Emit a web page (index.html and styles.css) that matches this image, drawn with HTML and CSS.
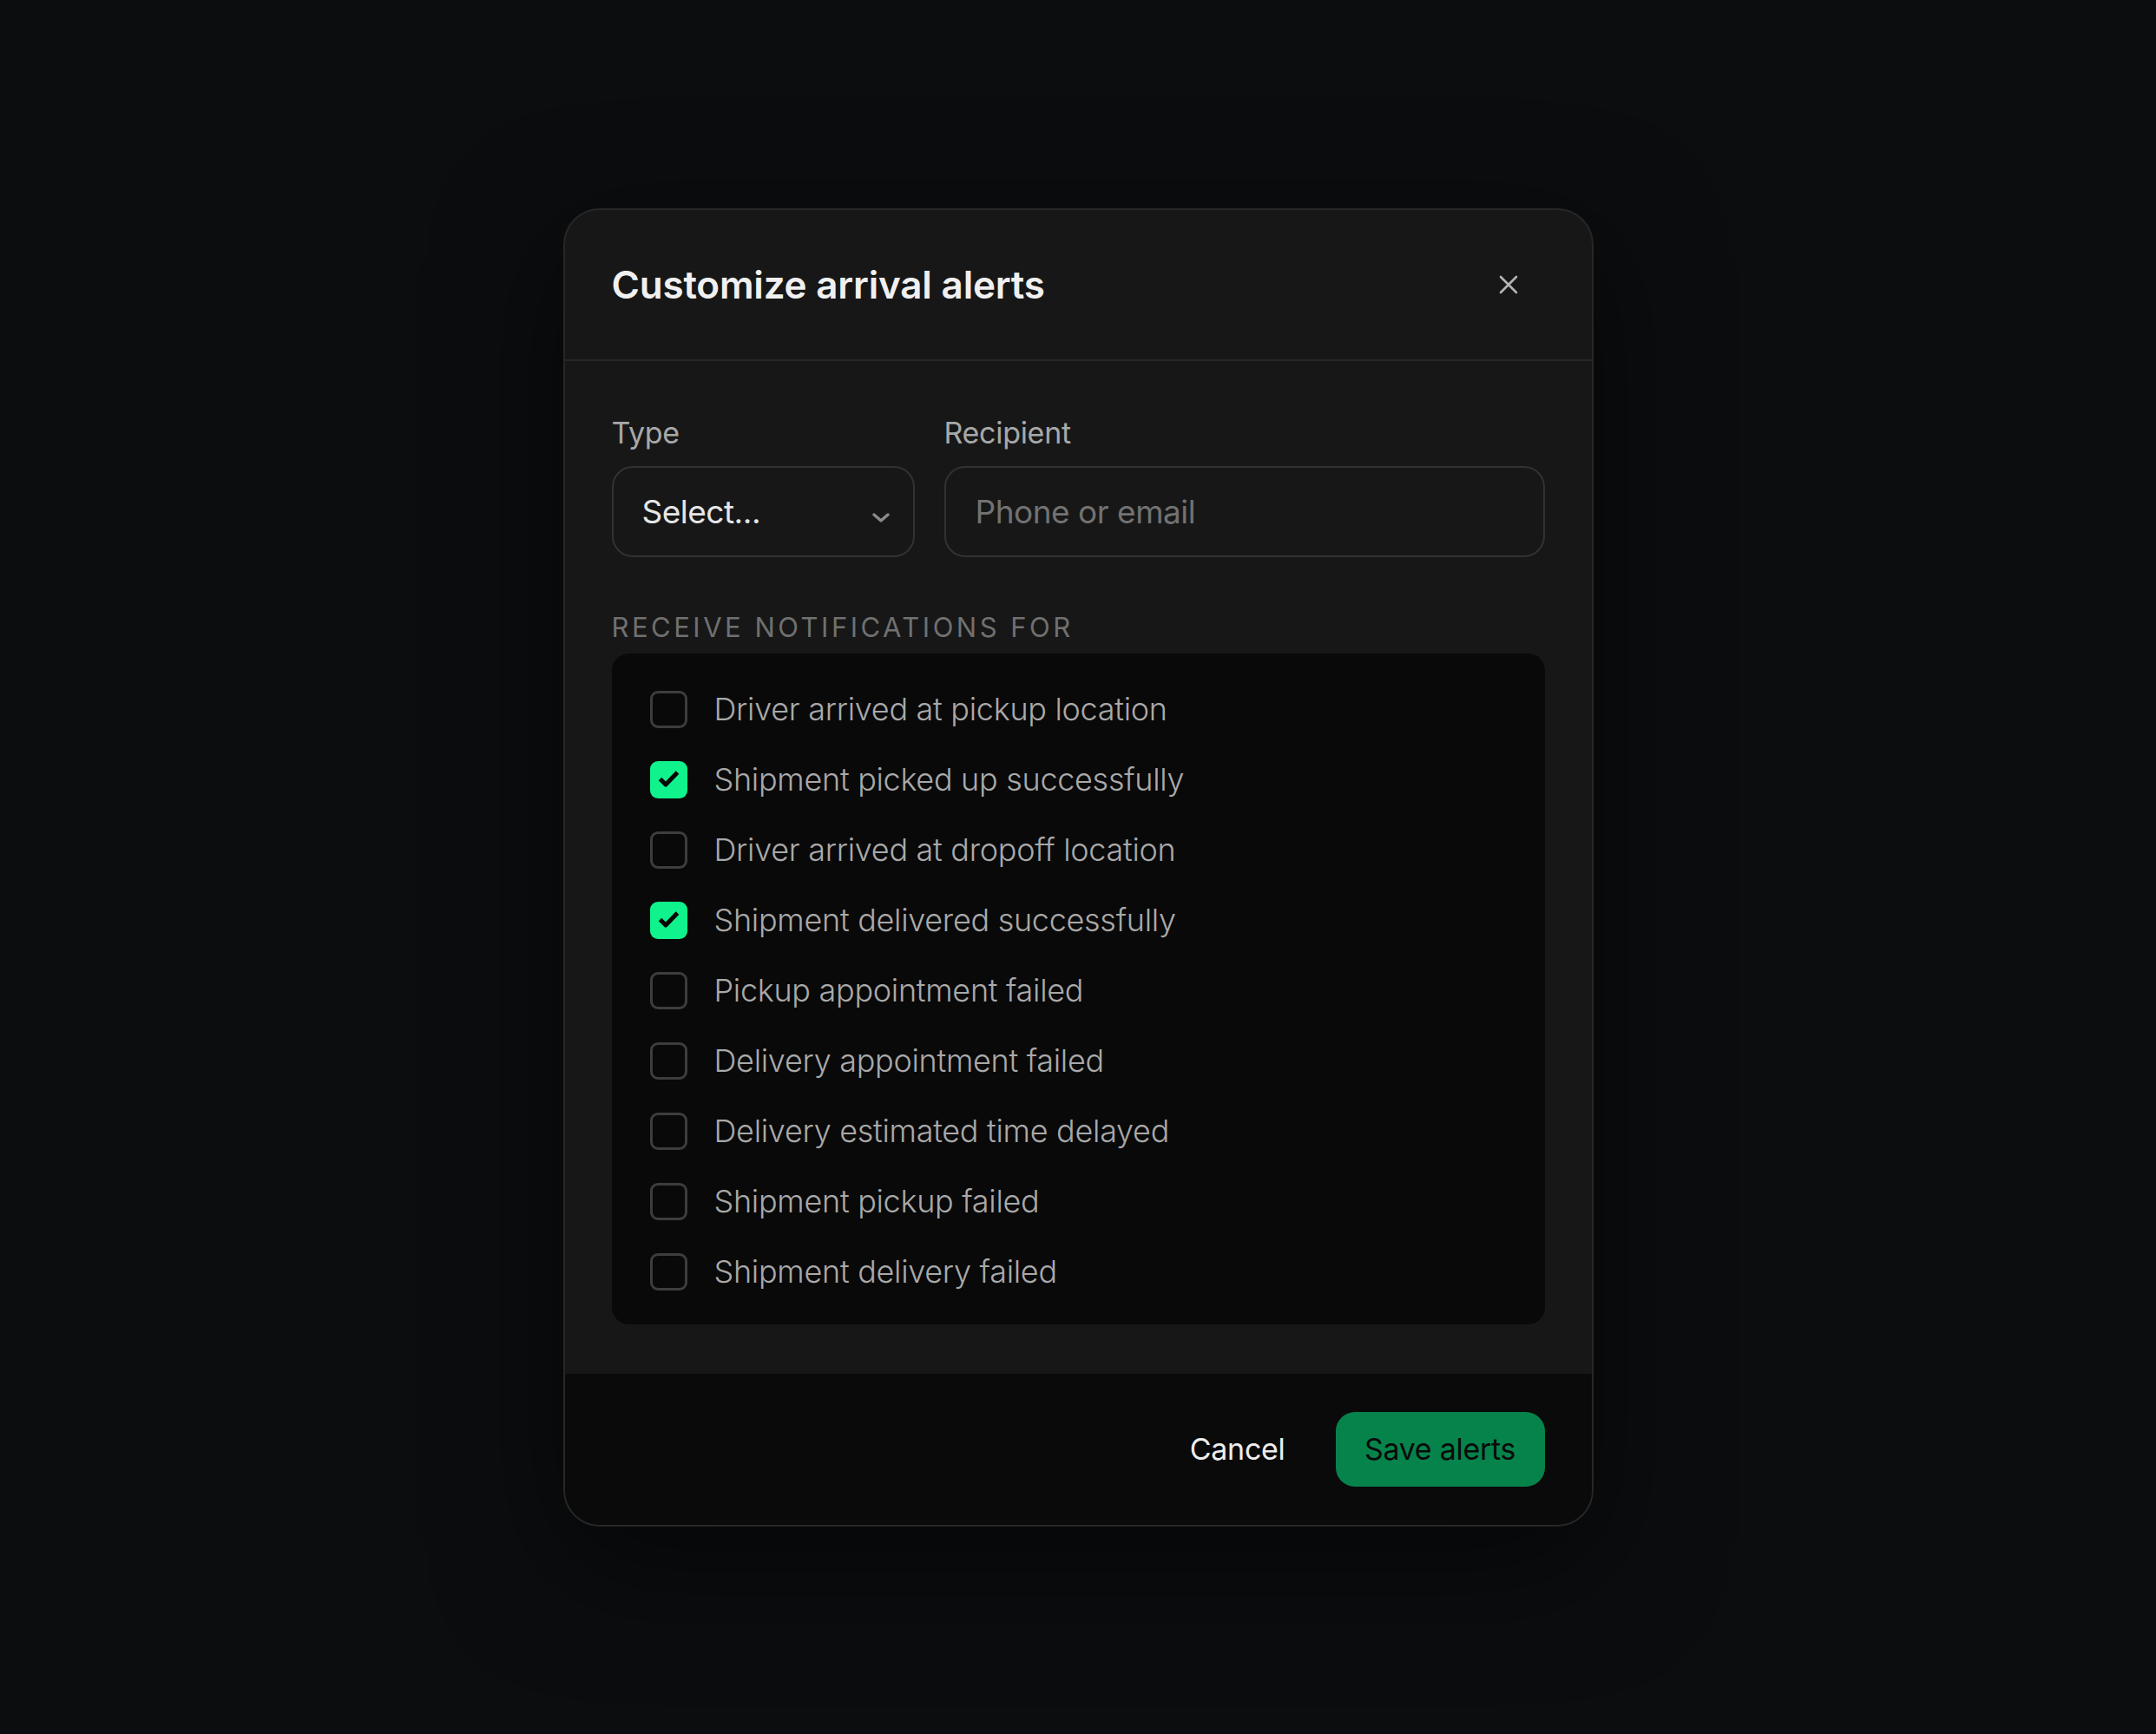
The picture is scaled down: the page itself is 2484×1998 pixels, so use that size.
FILE: index.html
```html
<!doctype html>
<html>
<head>
<meta charset="utf-8">
<meta name="viewport" content="width=device-width,initial-scale=1.0" />
<title>Customize arrival alerts</title>
<link rel="stylesheet" href="styles.css">
</head>
<body>
  <div class="modal">
    <div class="modal-head">
      <h1>Customize arrival alerts</h1>
      <button class="close" aria-label="Close">
        <svg width="22" height="22" viewBox="0 0 22 22"><path d="M2 2L20 20M20 2L2 20" stroke="currentColor" stroke-width="2.6" stroke-linecap="round"/></svg>
      </button>
    </div>

    <div class="modal-body">
      <div class="fields">
        <div class="field">
          <label>Type</label>
          <div class="select">
            <span>Select...</span>
            <svg width="22" height="13" viewBox="0 0 22 13"><path d="M3 3L11 10L19 3" fill="none" stroke="currentColor" stroke-width="3.4" stroke-linecap="round" stroke-linejoin="round"/></svg>
          </div>
        </div>
        <div class="field">
          <label>Recipient</label>
          <input class="input" type="text" placeholder="Phone or email">
        </div>
      </div>

      <div class="section-label">Receive notifications for</div>
      <ul class="checklist">
        <li><span class="box"></span>Driver arrived at pickup location</li>
        <li><span class="box checked"><svg width="43" height="43" viewBox="0 0 43 43"><path d="M11.5 20.5L18 27L31.5 13" fill="none" stroke="#050505" stroke-width="5" stroke-linejoin="round"/></svg></span>Shipment picked up successfully</li>
        <li><span class="box"></span>Driver arrived at dropoff location</li>
        <li><span class="box checked"><svg width="43" height="43" viewBox="0 0 43 43"><path d="M11.5 20.5L18 27L31.5 13" fill="none" stroke="#050505" stroke-width="5" stroke-linejoin="round"/></svg></span>Shipment delivered successfully</li>
        <li><span class="box"></span>Pickup appointment failed</li>
        <li><span class="box"></span>Delivery appointment failed</li>
        <li><span class="box"></span>Delivery estimated time delayed</li>
        <li><span class="box"></span>Shipment pickup failed</li>
        <li><span class="box"></span>Shipment delivery failed</li>
      </ul>
    </div>

    <div class="modal-foot">
      <button class="btn-text">Cancel</button>
      <button class="btn-primary">Save alerts</button>
    </div>
  </div>
</body>
</html>
```

FILE: styles.css
```css
html {
  height: 100%;
  background: #0b0d0f;
}

body {
  display: flex;
  min-height: 100vh;
  margin: 0;
  align-items: center;
  justify-content: center;
  font-family: Inter, "Liberation Sans", sans-serif;
  color: #e8e8e8;
}

.modal {
  box-sizing: border-box;
  display: flex;
  flex-direction: column;
  width: 1187px;
  overflow: hidden;
  border: 2px solid #272727;
  border-radius: 42px;
  background: #171717;
  box-shadow: 0 40px 140px rgba(0, 0, 0, 0.55);
}

/* header */
.modal-head {
  display: flex;
  height: 172px;
  padding: 0 54px;
  align-items: center;
  justify-content: space-between;
  border-bottom: 2px solid #262626;
}

.modal-head h1 {
  margin: 0;
  font-size: 44px;
  font-weight: 600;
  letter-spacing: -0.2px;
  color: #f0f0f0;
}

.close {
  display: flex;
  width: 60px;
  height: 60px;
  margin-right: 12px;
  padding: 0;
  align-items: center;
  justify-content: center;
  border: 0;
  background: none;
  color: #b4b4b4;
}

/* body */
.modal-body {
  padding: 62px 54px 57px;
}

.fields {
  display: grid;
  grid-template-columns: 349px 1fr;
  gap: 34px;
}

.field label {
  display: block;
  margin-bottom: 18px;
  font-size: 34px;
  line-height: 41px;
  font-weight: 400;
  letter-spacing: -0.3px;
  color: #a8a8a8;
}

.select,
.input {
  box-sizing: border-box;
  width: 100%;
  height: 105px;
  border: 2px solid #323232;
  border-radius: 24px;
  background: #171717;
  font-family: inherit;
  font-size: 37px;
  letter-spacing: -0.5px;
}

.select {
  display: flex;
  padding: 0 26px 0 33px;
  align-items: center;
  justify-content: space-between;
  color: #e6e6e6;
}

.select svg {
  margin-top: 14px;
  color: #8a8a8a;
}

.input {
  display: block;
  padding: 0 34px;
  color: #e6e6e6;
  outline: none;
}

.input::placeholder {
  color: #727272;
}

.section-label {
  margin: 62px 0 12px;
  font-size: 31px;
  line-height: 37px;
  letter-spacing: 3.5px;
  text-transform: uppercase;
  color: #707070;
}

.checklist {
  display: flex;
  flex-direction: column;
  gap: 38px;
  margin: 0;
  padding: 43px 44px 39px;
  list-style: none;
  border-radius: 20px;
  background: #090909;
}

.checklist li {
  display: flex;
  height: 43px;
  align-items: center;
  gap: 31px;
  font-size: 36px;
  font-weight: 300;
  letter-spacing: -0.3px;
  color: #a9a9a9;
}

.box {
  box-sizing: border-box;
  flex: 0 0 43px;
  width: 43px;
  height: 43px;
  border: 3px solid #3d3d3d;
  border-radius: 9px;
}

.box.checked {
  border: 0;
  background: #0ff28c;
}

.box svg {
  display: block;
}

/* footer */
.modal-foot {
  display: flex;
  height: 174px;
  padding: 0 54px;
  align-items: center;
  justify-content: flex-end;
  gap: 58px;
  background: #0a0a0a;
}

.modal-foot button {
  font-family: inherit;
  font-size: 34px;
  font-weight: 400;
  letter-spacing: -0.3px;
  cursor: pointer;
}

.btn-text {
  padding: 0;
  border: 0;
  background: none;
  color: #ededed;
}

.btn-primary {
  width: 241px;
  height: 86px;
  border: 0;
  border-radius: 22px;
  background: #06834b;
  color: #0a0a0a;
}
```
